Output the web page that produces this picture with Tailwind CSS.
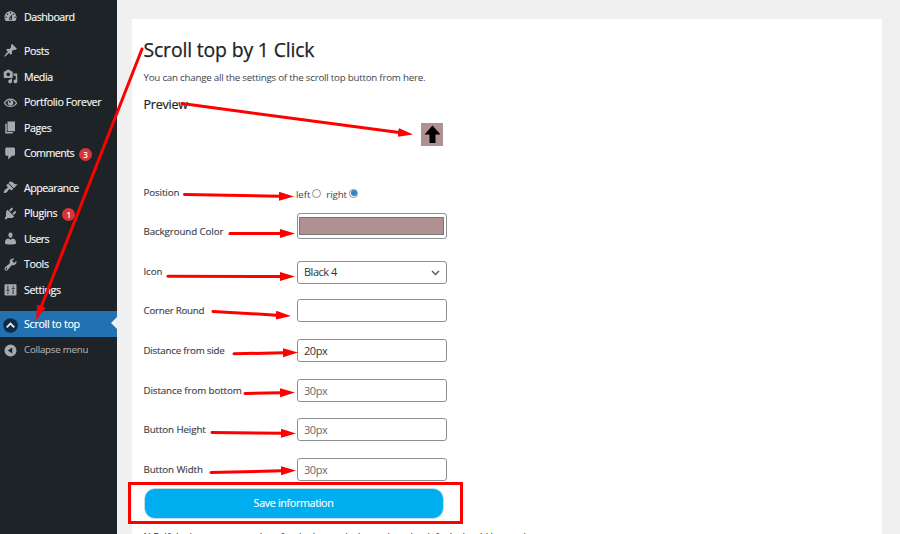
<!DOCTYPE html>
<html lang="en">
<head>
<meta charset="utf-8">
<title>Scroll top by 1 Click</title>
<script src="https://cdn.jsdelivr.net/npm/@tailwindcss/browser@4"></script>
</head>
<body class="relative flex h-[534px] w-[900px] overflow-hidden bg-[#f0f0f1] font-['Open_Sans','Noto_Sans',sans-serif] text-[#3c434a]">

<nav class="flex h-full w-[117px] shrink-0 flex-col bg-[#1d2327] pt-1 text-[10.7px] tracking-[-0.38px] text-[#f6f7f7] [&_a]:flex [&_a]:h-[25.6px] [&_a]:shrink-0 [&_a]:items-center [&_a]:gap-[6px] [&_a]:pl-[3px] [&_a]:whitespace-nowrap [&_svg]:size-[15px] [&_svg]:shrink-0 [&_svg]:fill-[#a7aaad] [&_span]:[-webkit-text-stroke:0.15px_currentColor]">
  <a><svg viewBox="0 0 20 20"><path d="M3.76 16h12.48c1.1-1.37 1.76-3.11 1.76-5 0-4.42-3.58-8-8-8s-8 3.58-8 8c0 1.89.66 3.63 1.76 5zM10 4c.55 0 1 .45 1 1s-.45 1-1 1-1-.45-1-1 .45-1 1-1zM6 6c.55 0 1 .45 1 1s-.45 1-1 1-1-.45-1-1 .45-1 1-1zm8 0c.55 0 1 .45 1 1s-.45 1-1 1-1-.45-1-1 .45-1 1-1zm-5.37 5.55L12 7v6c0 1.1-.9 2-2 2s-2-.9-2-2c0-.57.24-1.08.63-1.45zM4 10c.55 0 1 .45 1 1s-.45 1-1 1-1-.45-1-1 .45-1 1-1zm12 0c.55 0 1 .45 1 1s-.45 1-1 1-1-.45-1-1 .45-1 1-1zm-5 3c0-.55-.45-1-1-1s-1 .45-1 1 .45 1 1 1 1-.45 1-1z"/></svg><span class="tracking-[-0.5px]">Dashboard</span></a>
  <a class="mt-[8.6px]"><svg viewBox="0 0 20 20"><path d="M10.44 3.02l1.82-1.82 6.36 6.35-1.83 1.82c-1.05-.68-2.48-.57-3.41.36l-.75.75c-.92.93-1.04 2.35-.35 3.41l-1.83 1.82-2.41-2.41-2.8 2.79c-.42.42-3.38 2.71-3.8 2.29s1.86-3.39 2.28-3.81l2.79-2.79L4.1 9.36l1.83-1.82c1.05.69 2.48.57 3.4-.36l.75-.75c.93-.92 1.05-2.35.36-3.41z"/></svg><span>Posts</span></a>
  <a><svg viewBox="0 0 20 20"><path fill-rule="evenodd" d="M13 11V4c0-.55-.45-1-1-1h-1.67L9 1H5L3.67 3H2c-.55 0-1 .45-1 1v7c0 .55.45 1 1 1h10c.55 0 1-.45 1-1zM7 4.5c1.38 0 2.5 1.12 2.5 2.5S8.38 9.5 7 9.5 4.5 8.38 4.5 7 5.62 4.5 7 4.5zM14 6h5v10.5c0 1.38-1.12 2.5-2.5 2.5S14 17.88 14 16.5s1.12-2.5 2.5-2.5c.17 0 .34.02.5.05V9h-3V6zm-4 8.05V13h2v3.5c0 1.38-1.12 2.5-2.5 2.5S7 17.88 7 16.5 8.12 14 9.5 14c.17 0 .34.02.5.05z"/></svg><span>Media</span></a>
  <a><svg viewBox="0 0 20 20"><path fill-rule="evenodd" d="M10 4.500C5.800 4.500 2.700 7 1 10.500c1.700 3.500 4.800 5.500 9 5.500s7.300-2 9-5.500C17.300 7 14.200 4.500 10 4.500zM10 6.200c3.200 0 5.600 1.700 7.100 4.300-1.500 2.500-3.900 3.900-7.100 3.900s-5.600-1.400-7.100-3.900C4.400 7.900 6.800 6.200 10 6.200z"/><circle cx="10" cy="10.200" r="3.700"/><circle cx="9" cy="9" r="1.200" fill="#1d2327"/></svg><span>Portfolio Forever</span></a>
  <a><svg viewBox="0 0 20 20"><path d="M6 15V2h10v13H6zm-1 1h8v2H3V5h2v11z"/></svg><span>Pages</span></a>
  <a><svg viewBox="0 0 20 20" class="mt-px"><path d="M5 2h9c1.1 0 2 .9 2 2v7c0 1.1-.9 2-2 2h-2l-5 5v-5H5c-1.1 0-2-.9-2-2V4c0-1.1.9-2 2-2z"/></svg><span class="tracking-[-0.55px]">Comments</span><b class="-ml-[1px] mt-[3px] flex size-[13px] items-center justify-center rounded-full bg-[#d63638] text-[8px] font-semibold tracking-normal text-white">3</b></a>
  <a class="mt-[8.6px]"><svg viewBox="0 0 20 20"><path d="M14.48 11.06L7.41 3.99l1.5-1.5c.5-.56 2.3-.47 3.51.32 1.21.8 1.43 1.28 2.91 2.1 1.18.64 2.45 1.26 4.45.85zm-.71.71L6.7 4.7 4.93 6.47c-.39.39-.39 1.02 0 1.41l1.060 1.060c.39.39.39 1.030 0 1.420-.6.6-1.430 1.110-2.210 1.690-.35.26-.7.53-1.010.84C1.430 14.230.4 16.080 1.4 17.070c.99 1 2.840-.03 4.180-1.360.31-.31.58-.66.85-1.020.57-.78 1.080-1.610 1.690-2.210.39-.39 1.020-.39 1.410 0l1.060 1.060c.39.39 1.020.39 1.410 0z"/></svg><span class="tracking-[-0.5px]">Appearance</span></a>
  <a><svg viewBox="0 0 20 20"><path d="M13.11 4.36L9.87 7.6 8 5.73l3.24-3.24c.35-.34 1.05-.2 1.56.32.52.51.66 1.21.31 1.55zm-8 1.77l.91-1.12 9.01 9.01-1.19.84c-.71.71-2.63 1.16-3.82 1.16H6.14L4.9 17.26c-.59.59-1.54.59-2.12 0-.59-.58-.59-1.53 0-2.12l1.24-1.24v-3.88c0-1.13.4-3.19 1.09-3.89zm7.26 3.97l3.24-3.24c.34-.35 1.04-.21 1.55.31.52.51.66 1.21.31 1.55l-3.24 3.25z"/></svg><span>Plugins</span><b class="-ml-[1px] mt-[3px] flex size-[13px] items-center justify-center rounded-full bg-[#d63638] text-[8px] font-semibold tracking-normal text-white">1</b></a>
  <a><svg viewBox="0 0 20 20"><path d="M10 9.25c-2.27 0-2.73-3.44-2.73-3.44C7 4.02 7.82 2 9.97 2c2.16 0 2.98 2.02 2.71 3.81 0 0-.41 3.44-2.68 3.44zm0 2.57L12.72 10c2.39 0 4.52 2.33 4.52 4.53v2.49s-3.65 1.13-7.24 1.13c-3.65 0-7.24-1.13-7.24-1.13v-2.49c0-2.25 1.94-4.48 4.47-4.48z"/></svg><span class="tracking-[-0.7px]">Users</span></a>
  <a><svg viewBox="0 0 20 20" class="mt-px"><path fill-rule="evenodd" d="M16.68 9.77c-1.34 1.34-3.3 1.67-4.95.99l-5.41 6.52c-.99.99-2.59.99-3.58 0s-.99-2.59 0-3.57l6.52-5.42c-.68-1.65-.35-3.61.99-4.95 1.28-1.28 3.12-1.62 4.72-1.06l-2.89 2.89 2.82 2.82 2.86-2.87c.53 1.58.18 3.39-1.08 4.65zM3.81 16.21c.4.39 1.04.39 1.43 0 .4-.4.4-1.04 0-1.43-.39-.4-1.03-.4-1.43 0-.39.39-.39 1.03 0 1.43z"/></svg><span>Tools</span></a>
  <a><svg viewBox="0 0 20 20"><path d="M3 3h14c.55 0 1 .45 1 1v13c0 .55-.45 1-1 1H3c-.55 0-1-.45-1-1V4c0-.55.45-1 1-1z"/><path d="M6.500 5v6M4.500 11.500h4M6.500 13.500v2.500M13.500 5v2M11.500 8.500h4M13.500 10v6" stroke="#1d2327" stroke-width="1.200"/></svg><span>Settings</span></a>
  <a class="relative mt-[8.6px] bg-[#2271b1] text-white"><svg viewBox="0 0 20 20" class="mt-[3px]"><circle cx="10" cy="10" r="9.700" fill="#0e2c47"/><path d="M5 12.500l5-5 5 5" fill="none" stroke="#e8edf1" stroke-width="2.500"/></svg><span class="tracking-[-0.3px]">Scroll to top</span><i class="absolute right-0 top-[6px] border-y-[6.500px] border-r-[6px] border-y-transparent border-r-[#f0f0f1]"></i></a>
  <a class="pt-[2px] text-[9.700px] tracking-[-0.22px] text-[#a7aaad]"><svg viewBox="0 0 20 20"><path fill-rule="evenodd" d="M10 2a8 8 0 1 0 0 16 8 8 0 0 0 0-16zM12.300 6v8L6.500 10z"/></svg><span>Collapse menu</span></a>
</nav>

<main class="ml-[15px] mt-[19px] h-[515px] w-[750px] overflow-hidden bg-white pl-[11.500px] text-[9.75px]">
  <h1 class="mt-[17px] h-[28px] whitespace-nowrap text-[19.400px] leading-[28px] tracking-[-0.150px] text-[#1d2327] [-webkit-text-stroke:0.25px_currentColor]">Scroll top by 1 Click</h1>
  <p class="mt-[7px] h-[14px] whitespace-nowrap leading-[14px] tracking-[-0.230px]">You can change all the settings of the scroll top button from here.</p>
  <h2 class="mt-[11px] h-[18px] text-[12.500px] leading-[18px] tracking-[-0.2px] text-[#1d2327] [-webkit-text-stroke:0.2px_currentColor]">Preview</h2>
  <div class="ml-[277.500px] mt-[9px] flex h-[23px] w-[22px] items-center justify-center bg-[#ae9190]">
    <svg class="h-[19px] w-[17px]" viewBox="0 0 17 19"><path d="M8.500.5L16.500 9.500H11.500V18H5.500V9.500H.5z"/></svg>
  </div>

  <form class="mt-[34px] grid w-[303.500px] grid-cols-[153.500px_150px] grid-rows-[33px_48px_38px_40px_40px_39px_40px_24px] whitespace-nowrap [&_label]:h-[14px] [&_label]:leading-[14px] [&_label]:tracking-[-0.1px] [&_label]:[-webkit-text-stroke:0.15px_currentColor] [&_input]:rounded-[3px] [&_input]:border [&_input]:border-[#8c8f94] [&_input]:px-[6px] [&_input]:text-[11px] [&_input]:tracking-[-0.45px]">
    <label class="mt-[6px]">Position</label>
    <div class="-ml-px flex h-[14px] items-center pt-[15px] leading-[14px] tracking-[-0.1px]">left<i class="mb-[4px] ml-[2px] size-[9px] rounded-full border border-[#8c8f94]"></i><span class="ml-[5px]">right</span><i class="mb-[4px] ml-[2px] flex size-[9px] items-center justify-center rounded-full border border-[#8c8f94]"><b class="size-[6px] rounded-full bg-[#3582c4]"></b></i></div>
    <label class="mt-[12px] tracking-[-0.15px]">Background Color</label>
    <div class="h-[26px] rounded-[3px] border border-[#8c8f94] py-[3px] pl-px pr-[2px]"><div class="h-[18px] border border-[#777] bg-[#ae9190]"></div></div>
    <label class="mt-[4px]">Icon</label>
    <div class="flex h-[23px] items-center justify-between rounded-[3px] border border-[#8c8f94] px-[6px] text-[11px] tracking-[-0.5px] text-[#2c3338]">Black 4<svg class="size-[9px]" viewBox="0 0 9 9"><path d="M1 3l3.500 3.500L8 3" fill="none" stroke="#50575e" stroke-width="1.400"/></svg></div>
    <label class="mt-[5px] !tracking-[-0.25px]">Corner Round</label><input class="h-[23px]">
    <label class="mt-[5px] !tracking-[-0.22px]">Distance from side</label><input class="h-[23px] text-[#2c3338]" value="20px">
    <label class="mt-[5px]">Distance from bottom</label><input class="h-[23px] placeholder:text-[#646970]" placeholder="30px">
    <label class="mt-[5px]">Button Height</label><input class="h-[23px] placeholder:text-[#646970]" placeholder="30px">
    <label class="mt-[5px]">Button Width</label><input class="h-[23px] placeholder:text-[#646970]" placeholder="30px">
  </form>
  <button class="mt-[6px] block h-[31px] w-[300px] rounded-[11px] border border-[#c3dce8] bg-[#00adee] text-[10.700px] tracking-[-0.320px] text-white [-webkit-text-stroke:0.15px_currentColor]">Save information</button>
  <p class="mt-[10px] h-[14px] whitespace-nowrap leading-[16px] tracking-[-0.1px] [-webkit-text-stroke:0.15px_currentColor]">N.B: If the icon or some values for the button isn't set, then the default should be used.</p>
</main>

<!-- Annotation arrows and highlight box -->
<svg class="pointer-events-none absolute inset-0" width="900" height="534" viewBox="0 0 900 534" fill="none" stroke="#ff0000" stroke-width="3" stroke-linecap="round">
  <defs><marker id="head" markerUnits="userSpaceOnUse" markerWidth="16" markerHeight="10" refX="1" refY="5" orient="auto" viewBox="0 0 16 10"><path d="M0 .5L15 5 0 9.500z" fill="#ff0000" stroke="none"/></marker></defs>
  <path marker-end="url(#head)" d="M142 49L41.100 307"/>
  <path marker-end="url(#head)" d="M182 103.500L399.100 132.600"/>
  <path marker-end="url(#head)" d="M184.500 194.500L280 196.300"/>
  <path marker-end="url(#head)" d="M230 233.500H281"/>
  <path marker-end="url(#head)" d="M168 276.300L281 276.500"/>
  <path marker-end="url(#head)" d="M213 311.500L277 315.200"/>
  <path marker-end="url(#head)" d="M234 353.800L284 352.800"/>
  <path marker-end="url(#head)" d="M245 393.500L281 392.800"/>
  <path marker-end="url(#head)" d="M212 432.500L282 433.300"/>
  <path marker-end="url(#head)" d="M211 472.500L282 470.800"/>
  <rect x="129.500" y="483.500" width="332" height="39" stroke-linecap="butt"/>
</svg>
</body>
</html>
